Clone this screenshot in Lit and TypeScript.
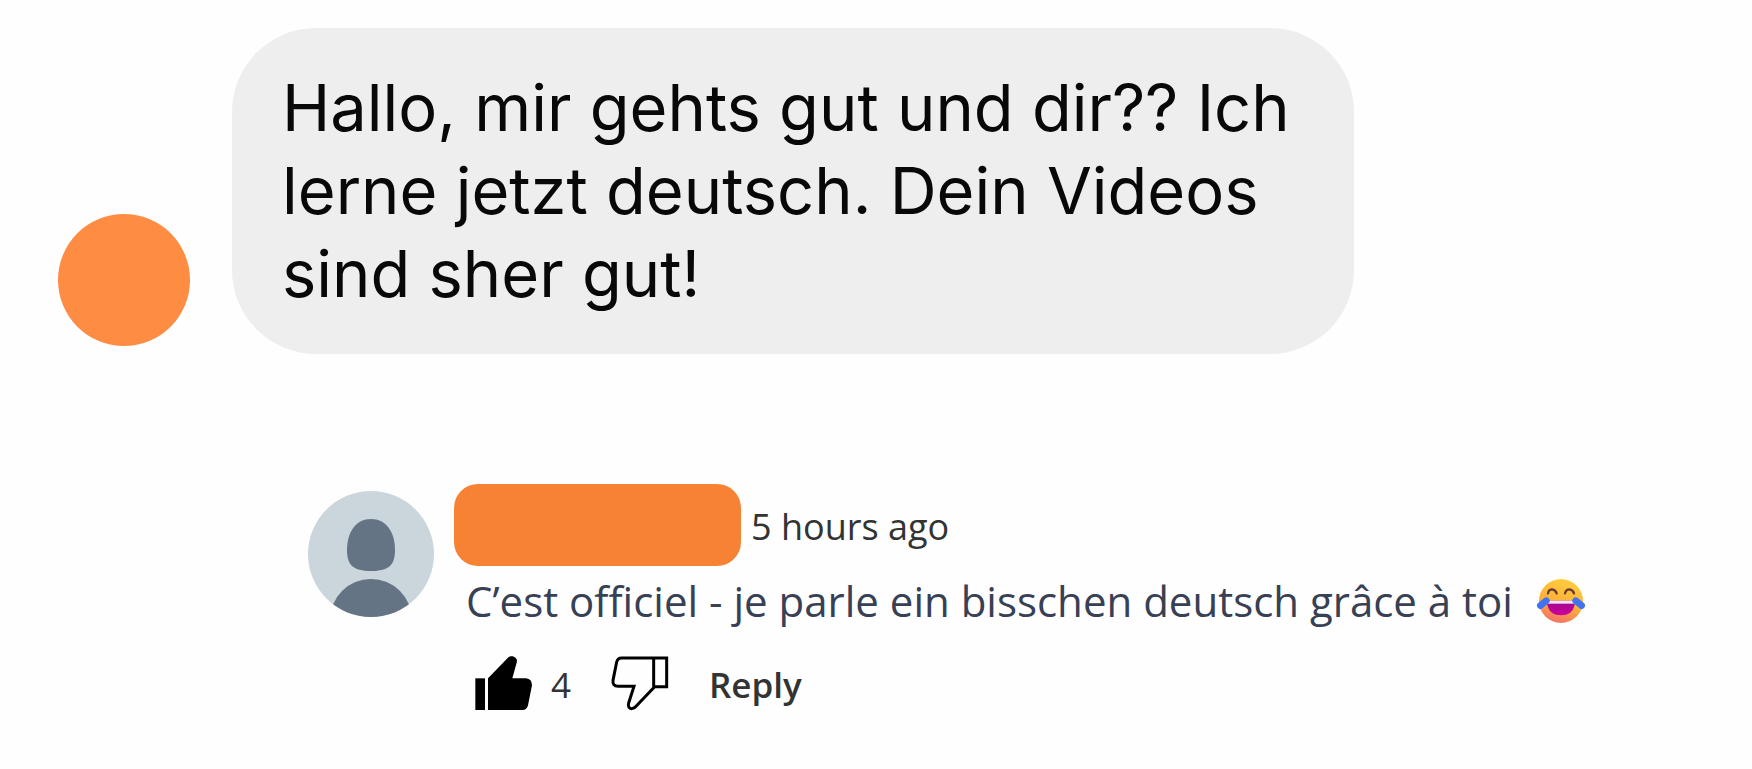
import { LitElement, html, css, svg } from "lit";
import { customElement, property } from "lit/decorators.js";

const thumbUp = svg`<svg class="thumb" viewBox="75 63 174 165" aria-hidden="true">
  <path d="M76 130H105V225H76Z" />
  <path d="M114 130L171 71C177 62 190 61 197 69C201 73 202 77 200 83L187 130H228Q246 132 246 151L234 211Q231 225 217 225H114Z" />
</svg>`;

const thumbDown = svg`<svg class="thumb" viewBox="487 63 174 165" aria-hidden="true">
  <path fill="none" stroke="#000" stroke-width="9"
    d="M615 69H519Q507 69 504 81L493 136Q491 154 508 154H556L540 204C537 214 541 220 549 221C555 221 559 218 563 213L618 155H654V69H615V155" />
</svg>`;

const joyFace = svg`<svg class="emoji" viewBox="0 0 144 136" role="img" aria-label="Face with tears of joy">
  <defs>
    <linearGradient id="skin" x1="0.7" y1="0" x2="0.4" y2="1">
      <stop offset="0" stop-color="#ffce3f" />
      <stop offset="0.6" stop-color="#fdae38" />
      <stop offset="1" stop-color="#f2716b" />
    </linearGradient>
    <linearGradient id="mouth" x1="0" y1="0" x2="0" y2="1">
      <stop offset="0" stop-color="#9b0b8e" />
      <stop offset="1" stop-color="#d0009c" />
    </linearGradient>
  </defs>
  <circle cx="72" cy="68" r="66" fill="url(#skin)" />
  <path d="M33 45Q35 33 45 33Q56 34 59 45M84 45Q87 33 97 33Q108 34 111 45" fill="none" stroke="#6b3a34" stroke-width="7" stroke-linecap="round" />
  <path d="M31 67H113V80Q106 111 72 111Q38 111 31 80Z" fill="url(#mouth)" />
  <path d="M31 67H113V76H31Z" fill="#f3e2f5" />
  <path d="M10 82L28 67M134 82L116 67" fill="none" stroke="#3f73f2" stroke-width="20" stroke-linecap="round" />
</svg>`;

@customElement("chat-message")
class ChatMessage extends LitElement {
  @property() text = "";

  static styles = css`
    :host {
      display: flex;
      align-items: flex-end;
      gap: 42px;
      padding: 28px 58px 0;
    }
    .avatar {
      flex: none;
      width: 132px;
      height: 132px;
      margin-bottom: 8px;
      border-radius: 50%;
      background: #ff8c43;
    }
    .bubble {
      box-sizing: border-box;
      max-width: 1122px;
      margin: 0;
      padding: 38px 50px 39px;
      border-radius: 84px;
      background: #eee;
      color: #080808;
      font: 65px/83px Inter, sans-serif;
    }
  `;

  render() {
    return html`<div class="avatar"></div>
      <p class="bubble">${this.text}</p>`;
  }
}

@customElement("user-comment")
class UserComment extends LitElement {
  @property() time = "";
  @property() text = "";
  @property({ type: Number }) likes = 0;

  static styles = css`
    :host {
      display: flex;
      gap: 20px;
      padding: 130px 58px 40px 308px;
      font-family: "Open Sans", sans-serif;
      font-variant-ligatures: none;
      color: #333;
    }
    .portrait {
      flex: none;
      width: 126px;
      height: 126px;
      margin-top: 7px;
    }
    .meta {
      display: flex;
      align-items: center;
      gap: 10px;
    }
    .name {
      width: 287px;
      height: 82px;
      border-radius: 24px;
      background: #f78234;
    }
    .time {
      padding-top: 4px;
      font-size: 36px;
      line-height: 48px;
    }
    .text {
      display: flex;
      align-items: center;
      gap: 24px;
      margin: 3px 0 0 12px;
      color: #374054;
      font-size: 42px;
      line-height: 64px;
    }
    .emoji {
      flex: none;
      width: 48px;
      height: 46px;
    }
    .actions {
      display: flex;
      align-items: center;
      margin: 18px 0 0 21px;
      font-size: 35px;
      line-height: 60px;
    }
    .action {
      display: flex;
      align-items: center;
      gap: 18px;
      padding: 0;
      border: 0;
      background: none;
      color: inherit;
      font: inherit;
      cursor: pointer;
    }
    .label {
      padding-top: 4px;
    }
    .down {
      margin: 0 40px;
    }
    .reply {
      font-weight: 600;
    }
    .thumb {
      width: 58px;
      height: 55px;
    }
  `;

  render() {
    return html`
      <svg class="portrait" viewBox="0 0 126 126" aria-hidden="true">
        <clipPath id="round"><circle cx="63" cy="63" r="63" /></clipPath>
        <g clip-path="url(#round)">
          <rect width="126" height="126" fill="#cad5dc" />
          <path d="M63 28C78 28 87 41 87 59C87 74 81 80 63 80C45 80 39 74 39 59C39 41 48 28 63 28Z" fill="#647484" />
          <ellipse cx="63" cy="129" rx="41" ry="41" fill="#647484" />
        </g>
      </svg>
      <div class="body">
        <div class="meta">
          <div class="name"></div>
          <span class="time">${this.time}</span>
        </div>
        <p class="text"><span>${this.text}</span>${joyFace}</p>
        <div class="actions">
          <button class="action" aria-label="Like">${thumbUp}<span class="label">${this.likes}</span></button>
          <button class="action down" aria-label="Dislike">${thumbDown}</button>
          <button class="action reply"><span class="label">Reply</span></button>
        </div>
      </div>
    `;
  }
}

@customElement("app-root")
class AppRoot extends LitElement {
  static styles = css`
    :host {
      display: block;
      min-height: 100vh;
      background: #fefefe;
    }
  `;

  render() {
    return html`
      <chat-message text="Hallo, mir gehts gut und dir?? Ich lerne jetzt deutsch. Dein Videos sind sher gut!"></chat-message>
      <user-comment time="5 hours ago" text="C’est officiel - je parle ein bisschen deutsch grâce à toi" likes="4"></user-comment>
    `;
  }
}
